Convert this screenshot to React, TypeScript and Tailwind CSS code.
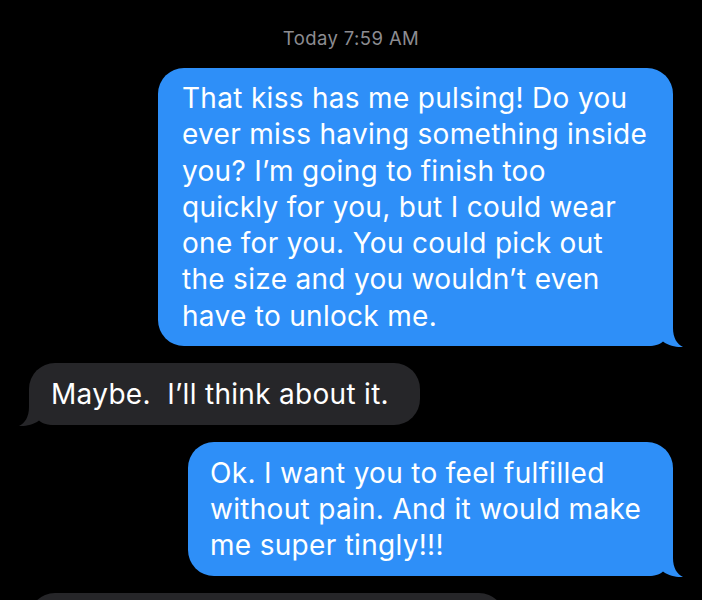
import React from 'react';

const BLUE = '#2e8ff8';
const GRAY = '#262629';

function Tail({ side, color }: { side: 'left' | 'right'; color: string }) {
  const d =
    side === 'right'
      ? 'M0,0 H33 V12 C33,22 37,28 43,31 C37,31.5 29,30 23,25.5 C19,29 14,30 8,30 H0 Z'
      : 'M45,0 H12 V12 C12,22 8,28 2,31 C8,31.5 16,30 22,25.5 C26,29 31,30 37,30 H45 Z';
  return (
    <svg
      width="45"
      height="32"
      viewBox="0 0 45 32"
      className={`absolute bottom-[-2px] ${side === 'right' ? 'right-[-12px]' : 'left-[-12px]'}`}
    >
      <path d={d} fill={color} />
    </svg>
  );
}

type Msg = { from: 'me' | 'them'; lines: string[]; width: string; pad: string };

const messages: Msg[] = [
  {
    from: 'me',
    width: 'w-[515px]',
    pad: 'pl-[24px] py-[12px]',
    lines: [
      'That kiss has me pulsing! Do you',
      'ever miss having something inside',
      'you? I’m going to finish too',
      'quickly for you, but I could wear',
      'one for you. You could pick out',
      'the size and you wouldn’t even',
      'have to unlock me.',
    ],
  },
  {
    from: 'them',
    width: 'w-[391px]',
    pad: 'pl-[22px] py-[13px]',
    lines: ['Maybe.\u00a0 I’ll think about it.'],
  },
  {
    from: 'me',
    width: 'w-[485px]',
    pad: 'pl-[22px] py-[12.5px]',
    lines: ['Ok. I want you to feel fulfilled', 'without pain. And it would make', 'me super tingly!!!'],
  },
];

function Bubble({ msg }: { msg: Msg }) {
  const mine = msg.from === 'me';
  const color = mine ? BLUE : GRAY;
  return (
    <div className={`flex ${mine ? 'justify-end' : 'justify-start'}`}>
      <div
        className={`relative ${msg.width} ${msg.pad} rounded-[26px] text-white text-[28px] leading-[36.3px] tracking-[0.3px] whitespace-nowrap`}
        style={{ backgroundColor: color }}
      >
        <Tail side={mine ? 'right' : 'left'} color={color} />
        <div className="relative">
          {msg.lines.map((l, i) => (
            <div key={i}>{l}</div>
          ))}
        </div>
      </div>
    </div>
  );
}

export default function App() {
  return (
    <div
      className="h-[600px] w-[702px] overflow-hidden bg-black px-[29px] pt-[27px] antialiased"
      style={{ fontFamily: 'Inter, "Noto Sans", "Liberation Sans", sans-serif' }}
    >
      <div className="text-center text-[18.5px] leading-[22px] tracking-[0.4px] text-[#8c8c91]">
        Today 7:59 AM
      </div>

      <div className="mt-[19px] flex flex-col gap-[17px]">
        {messages.map((m, i) => (
          <Bubble key={i} msg={m} />
        ))}
        <div className="flex justify-start">
          <div className="h-[62px] w-[476px] rounded-[26px] bg-[#262629]" />
        </div>
      </div>
    </div>
  );
}
